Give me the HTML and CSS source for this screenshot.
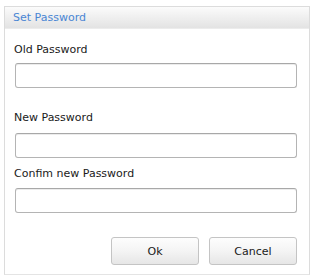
FILE: index.html
```html
<!DOCTYPE html>
<html>
<head>
<meta charset="utf-8">
<link rel="stylesheet" href="styles.css">
</head>
<body>
<div class="dialog">
  <div class="titlebar">Set Password</div>
  <div class="content">
    <label class="label l1">Old Password</label>
    <div class="input"></div>
    <label class="label l2">New Password</label>
    <div class="input"></div>
    <label class="label l3">Confim new Password</label>
    <div class="input"></div>
    <div class="buttons">
      <div class="btn">Ok</div>
      <div class="btn">Cancel</div>
    </div>
  </div>
</div>
</body>
</html>
```

FILE: styles.css
```css
html, body {
  margin: 0;
  padding: 0;
  background: #ffffff;
}
body {
  padding: 6px 0 0 4px;
  font-family: "DejaVu Sans", Verdana, sans-serif;
  font-size: 11px;
  color: #1a1a1a;
}
.dialog {
  width: 306px;
  height: 269px;
  border: 1px solid #dcdcdc;
  border-bottom-color: #e4e4e4;
  box-sizing: border-box;
  background: #fff;
  display: flex;
  flex-direction: column;
}
.titlebar {
  height: 21px;
  line-height: 21px;
  padding-left: 8px;
  color: #4a86d4;
  background: linear-gradient(#fbfbfb, #e3e3e3);
  border-bottom: 1px solid #ececec;
}
.content {
  padding: 0 12px 0 10px;
  display: flex;
  flex-direction: column;
}
.label {
  display: block;
  line-height: 14px;
  margin-left: -1px;
}
.l1 { margin-top: 14px; margin-bottom: 6px; }
.l2 { margin-top: 23px; margin-bottom: 8px; }
.l3 { margin-top: 9px; margin-bottom: 7px; }
.input {
  height: 25px;
  box-sizing: border-box;
  border: 1px solid #b4b4b4;
  border-top-color: #a8a8a8;
  border-radius: 3px;
  background: #fff;
  box-shadow: inset 0 1px 0 #ececec;
}
.buttons {
  display: flex;
  justify-content: flex-end;
  gap: 10px;
  margin-top: 24px;
}
.btn {
  width: 88px;
  height: 28px;
  box-sizing: border-box;
  border: 1px solid #c4c4c4;
  border-radius: 3px;
  background: linear-gradient(#fdfdfd 0%, #f4f4f4 50%, #e6e6e6 100%);
  display: flex;
  align-items: center;
  justify-content: center;
  color: #1a1a1a;
}
```
